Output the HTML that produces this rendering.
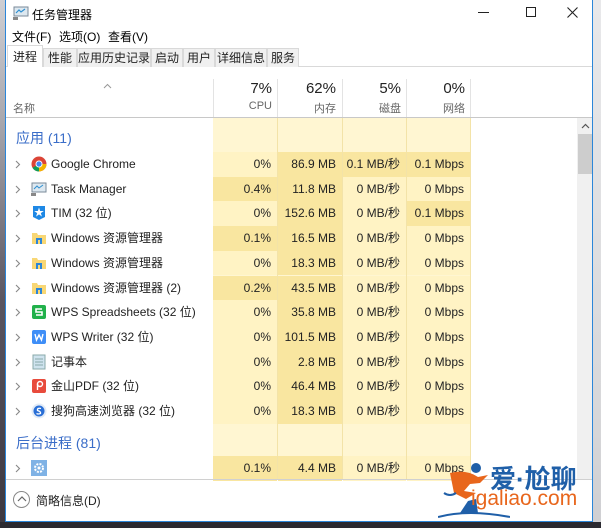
<!DOCTYPE html>
<html><head><meta charset="utf-8">
<style>
*{margin:0;padding:0;box-sizing:border-box}
body{width:601px;height:528px;overflow:hidden;position:relative;font-family:"Liberation Sans","Noto Sans CJK SC",sans-serif;font-size:12px;color:#000;background:#2a2830}
.abs{position:absolute}
#left{left:0;top:0;width:6px;height:528px;background:linear-gradient(#cfcfd3 0,#a9a8ae 120px,#5a5560 300px,#3c3840 528px)}
#right{left:593px;top:0;width:8px;height:528px;background:linear-gradient(#e8e8ea,#d8d8da 400px,#cfcfd2)}
#bot{left:0;top:522px;width:601px;height:6px;background:#2b2a30}
#win{left:5px;top:0;width:588px;height:522px;background:#fff;border:1px solid #2b86d9;border-top:none;overflow:hidden}
.r{text-align:right}
.cell{position:absolute;height:24.7px;line-height:24.7px;text-align:right;padding-right:6px;font-size:12px;color:#222}
.nm{position:absolute;left:45px;height:24.7px;line-height:24.7px;font-size:12px;color:#222;white-space:nowrap}
.chev{position:absolute;left:9px;width:6px;height:9px}
.ic{position:absolute;left:25px;width:16px;height:16px}
.tab{position:absolute;top:48px;height:19px;line-height:18px;font-size:12px;background:#f0f0f0;border:1px solid #d9d9d9;border-bottom:none;text-align:center;color:#222}
</style></head><body>
<div id="left" class="abs"></div>
<div id="right" class="abs"></div>
<div id="bot" class="abs"></div>
<div id="win" class="abs">
 <svg class="abs" style="left:7px;top:6px" width="16" height="14" viewBox="0 0 16 14"><rect x="1" y="1" width="14" height="9" fill="#dde8f0" stroke="#7a8a98"/><polyline points="3,7 6,4 8,6 12,3" fill="none" stroke="#2f8fd0" stroke-width="1.2"/><rect x="0" y="11" width="5" height="3" fill="#888"/></svg>
 <div class="abs" style="left:26px;top:6px;font-size:12px">任务管理器</div>
 <div class="abs" style="left:472px;top:12px;width:11px;height:1px;background:#222"></div>
 <div class="abs" style="left:520px;top:7px;width:10px;height:10px;border:1px solid #222"></div>
 <svg class="abs" style="left:561px;top:7px" width="11" height="11"><path d="M0.5 0.5L10.5 10.5M10.5 0.5L0.5 10.5" stroke="#222" stroke-width="1.1"/></svg>
 <div class="abs" style="left:6px;top:28px;font-size:12px">文件(F)</div>
 <div class="abs" style="left:53px;top:28px;font-size:12px">选项(O)</div>
 <div class="abs" style="left:102px;top:28px;font-size:12px">查看(V)</div>
 <div class="abs" style="left:0;top:66px;width:588px;height:1px;background:#d9d9d9"></div>
 <div class="tab" style="left:1px;top:45px;height:22px;width:36px;background:#fff;line-height:22px;z-index:2">进程</div>
 <div class="tab" style="left:37px;width:34px">性能</div>
 <div class="tab" style="left:71px;width:74px">应用历史记录</div>
 <div class="tab" style="left:145px;width:32px">启动</div>
 <div class="tab" style="left:177px;width:32px">用户</div>
 <div class="tab" style="left:209px;width:52px">详细信息</div>
 <div class="tab" style="left:261px;width:32px">服务</div>
 <svg class="abs" style="left:97px;top:83px" width="9" height="6"><path d="M1 5L4.5 1.5L8 5" fill="none" stroke="#999"/></svg>
 <div class="abs" style="left:7px;top:100px;color:#666;font-size:11px">名称</div>
 <div class="abs" style="left:207px;top:79px;width:1px;height:39px;background:#e3e3e3"></div>
 <div class="abs" style="left:271px;top:79px;width:1px;height:39px;background:#e3e3e3"></div>
 <div class="abs" style="left:336px;top:79px;width:1px;height:39px;background:#e3e3e3"></div>
 <div class="abs" style="left:400px;top:79px;width:1px;height:39px;background:#e3e3e3"></div>
 <div class="abs" style="left:464px;top:79px;width:1px;height:39px;background:#e3e3e3"></div>
 <div class="abs r" style="left:208px;top:80px;width:58px;font-size:15px;color:#222">7%</div>
 <div class="abs r" style="left:272px;top:80px;width:58px;font-size:15px;color:#222">62%</div>
 <div class="abs r" style="left:337px;top:80px;width:58px;font-size:15px;color:#222">5%</div>
 <div class="abs r" style="left:401px;top:80px;width:58px;font-size:15px;color:#222">0%</div>
 <div class="abs r" style="left:208px;top:100px;width:58px;font-size:11px;color:#666">CPU</div>
 <div class="abs r" style="left:272px;top:100px;width:58px;font-size:11px;color:#666">内存</div>
 <div class="abs r" style="left:337px;top:100px;width:58px;font-size:11px;color:#666">磁盘</div>
 <div class="abs r" style="left:401px;top:100px;width:58px;font-size:11px;color:#666">网络</div>
 <div class="abs" style="left:0;top:117px;width:588px;height:1px;background:#c8c8c8"></div>
 <div class="abs" style="left:207px;top:118px;width:258px;height:361px;background:#fff6d2"></div>
 <div class="abs" style="left:271px;top:118px;width:1px;height:361px;background:#f3e3a8"></div>
 <div class="abs" style="left:336px;top:118px;width:1px;height:361px;background:#f3e3a8"></div>
 <div class="abs" style="left:400px;top:118px;width:1px;height:361px;background:#f3e3a8"></div>
 <div class="abs" style="left:464px;top:118px;width:1px;height:361px;background:#f3e3a8"></div>
 <div id="rows"></div>
 <div class="abs" style="left:10px;top:128px;font-size:14px;color:#3a6dc8">应用 (11)</div>
 <div class="abs" style="left:10px;top:433px;font-size:14px;color:#3a6dc8">后台进程 (81)</div>
 <div class="abs" style="left:571px;top:118px;width:16px;height:361px;background:#f0f0f0"></div>
 <svg class="abs" style="left:575px;top:123px" width="9" height="6"><path d="M1 5L4.5 1.5L8 5" fill="none" stroke="#555" stroke-width="1.2"/></svg>
 <div class="abs" style="left:572px;top:134px;width:14px;height:40px;background:#cdcdcd"></div>
 <div class="abs" style="left:0;top:479px;width:588px;height:1px;background:#d0d0d0"></div>
 <div class="abs" style="left:7px;top:491px;width:17px;height:17px;border:1px solid #888;border-radius:50%"></div>
 <svg class="abs" style="left:11px;top:496px" width="10" height="6"><path d="M1 5L5 1L9 5" fill="none" stroke="#666" stroke-width="1.2"/></svg>
 <div class="abs" style="left:30px;top:492px;font-size:12px;color:#222">简略信息(D)</div>
 <svg class="abs" style="left:432px;top:463px" width="72" height="56" viewBox="0 0 72 56">
  <circle cx="38" cy="5" r="5" fill="#1f5fa8"/>
  <path d="M12 10 Q28 6 40 14 L50 12 L42 20 L32 21 L26 28 L38 30 L28 36 L16 30 Z" fill="#e8661c"/>
  <path d="M6 30 Q12 34 18 30" stroke="#1f5fa8" stroke-width="2" fill="none"/>
  <path d="M30 38 L38 36 L40 50 L22 50 Z" fill="#1f5fa8"/>
  <path d="M0 54 Q30 46 72 54" stroke="#1f5fa8" stroke-width="2" fill="none"/>
 </svg>
 <div class="abs" style="left:484px;top:459px;font-size:26px;font-weight:bold;color:#1f5fa8;white-space:nowrap">爱·尬聊</div>
 <div class="abs" style="left:465px;top:487px;font-size:21px;color:#e8661c;white-space:nowrap">igaliao.com</div>
</div>
<script>
var D=[
["chrome","Google Chrome","0%","86.9 MB","0.1 MB/秒","0.1 Mbps",0,1,1],
["tm","Task Manager","0.4%","11.8 MB","0 MB/秒","0 Mbps",1,0,0],
["tim","TIM (32 位)","0%","152.6 MB","0 MB/秒","0.1 Mbps",0,0,1],
["fold","Windows 资源管理器","0.1%","16.5 MB","0 MB/秒","0 Mbps",1,0,0],
["fold","Windows 资源管理器","0%","18.3 MB","0 MB/秒","0 Mbps",0,0,0],
["fold","Windows 资源管理器 (2)","0.2%","43.5 MB","0 MB/秒","0 Mbps",1,0,0],
["s","WPS Spreadsheets (32 位)","0%","35.8 MB","0 MB/秒","0 Mbps",0,0,0],
["w","WPS Writer (32 位)","0%","101.5 MB","0 MB/秒","0 Mbps",0,0,0],
["note","记事本","0%","2.8 MB","0 MB/秒","0 Mbps",0,0,0],
["pdf","金山PDF (32 位)","0%","46.4 MB","0 MB/秒","0 Mbps",0,0,0],
["sg","搜狗高速浏览器 (32 位)","0%","18.3 MB","0 MB/秒","0 Mbps",0,0,0],
null,
["gear","","0.1%","4.4 MB","0 MB/秒","0 Mbps",1,0,0]];
var I={
chrome:'<circle cx="8" cy="8" r="7.5" fill="#db4437"/><path d="M8 8L1.5 11.8A7.5 7.5 0 0 0 8 15.5L11.2 10Z" fill="#0f9d58"/><path d="M8 8L15.5 8A7.5 7.5 0 0 1 8 15.5Z" fill="#f4b400"/><circle cx="8" cy="8" r="3.5" fill="#fff"/><circle cx="8" cy="8" r="2.6" fill="#4285f4"/>',
tm:'<rect x="1" y="2" width="14" height="9" fill="#dde8f0" stroke="#7a8a98"/><polyline points="3,8 6,5 8,7 12,4" fill="none" stroke="#2f8fd0"/><rect x="0" y="12" width="5" height="3" fill="#888"/>',
tim:'<path d="M2 1h12v11l-6 3l-6-3z" fill="#1e88e5"/><text x="8" y="11" font-size="10" fill="#fff" text-anchor="middle">★</text>',
fold:'<path d="M1 3h5l1 2h8v9H1z" fill="#f8d775"/><rect x="5" y="8" width="6" height="6" fill="#2b86d9"/><rect x="7" y="10" width="2" height="4" fill="#f8d775"/>',
s:'<rect x="1" y="1" width="14" height="14" rx="2" fill="#21b14b"/><path d="M11 5H5v3h6v3H5" stroke="#fff" stroke-width="1.6" fill="none"/>',
w:'<rect x="1" y="1" width="14" height="14" rx="2" fill="#3e8ef7"/><path d="M4 5l1.5 6L8 6l2.5 5L12 5" stroke="#fff" stroke-width="1.4" fill="none"/>',
note:'<rect x="2" y="1" width="12" height="14" fill="#cfe3ee" stroke="#8aa"/><path d="M4 5h8M4 8h8M4 11h8" stroke="#8aa"/>',
pdf:'<rect x="1" y="1" width="14" height="14" rx="2" fill="#e84b3c"/><circle cx="9" cy="6" r="2.5" stroke="#fff" stroke-width="1.4" fill="none"/><path d="M6.5 6v6" stroke="#fff" stroke-width="1.4"/>',
sg:'<circle cx="8" cy="8" r="7.5" fill="#e3ecf7"/><circle cx="8" cy="8" r="5.5" fill="#2a6fd6"/><path d="M10 5.5Q6 4.5 6.5 7.5Q10 8.5 9.5 10.5Q7 11.5 5.5 10.5" stroke="#fff" stroke-width="1.3" fill="none"/>',
gear:'<rect x="0" y="0" width="16" height="16" fill="#7fb2e5"/><circle cx="8" cy="8" r="4" fill="none" stroke="#fff" stroke-width="2" stroke-dasharray="2 1.2"/><circle cx="8" cy="8" r="1.5" fill="#fff"/>'};
var h='',L='#fff3c4',K='#f9e6a0';
D.forEach(function(d,i){if(!d)return;var t=(i<11?152:154)+i*24.7;if(i==12)t=456;
h+='<svg class="chev" style="top:'+(t+8)+'px" viewBox="0 0 6 9"><path d="M1 1L4.5 4.5L1 8" fill="none" stroke="#888" stroke-width="1.1"/></svg>';
h+='<svg class="ic" style="top:'+(t+4)+'px" viewBox="0 0 16 16">'+I[d[0]]+'</svg>';
h+='<div class="nm" style="top:'+t+'px">'+d[1]+'</div>';
var xs=[207,272,337,401],w=[64,64,63,63],bg=[d[6]?K:L,K,d[7]?K:L,d[8]?K:L];
for(var j=0;j<4;j++){h+='<div class="cell" style="left:'+xs[j]+'px;top:'+t+'px;width:'+w[j]+'px;background:'+bg[j]+'">'+d[2+j]+'</div>';}
});
document.getElementById('rows').innerHTML=h;
</script>
</body></html>
